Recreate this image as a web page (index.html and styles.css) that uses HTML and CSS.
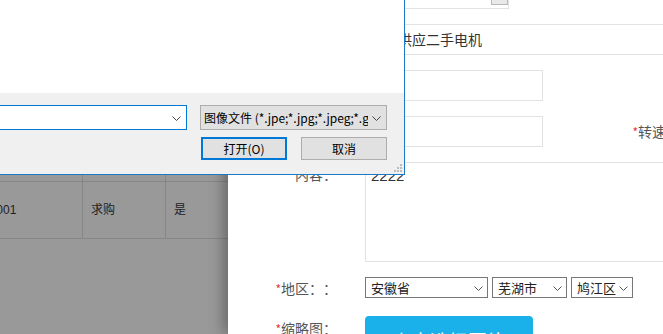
FILE: index.html
```html
<!DOCTYPE html>
<html lang="zh-CN">
<head>
<meta charset="utf-8">
<title>上传缩略图</title>
<link rel="stylesheet" href="styles.css">
</head>
<body>
<div class="screen">
  <div class="backdrop">
    <div class="tbl">
      <div class="trow thead">
        <div class="cell c1"></div><div class="cell c2"></div><div class="cell c3"></div>
      </div>
      <div class="trow">
        <div class="cell c1">20001</div><div class="cell c2">求购</div><div class="cell c3">是</div>
      </div>
    </div>
  </div>

  <div class="layer">
    <form class="form">
      <div class="row">
        <label class="lbl">日期：</label>
        <div class="ctl ipt w-s"><span class="pick"></span></div>
      </div>
      <div class="row">
        <label class="lbl"><i>*</i>标题：</label>
        <div class="ctl ipt w-l title">供应二手电机</div>
      </div>
      <div class="row">
        <label class="lbl">功率：</label>
        <div class="ctl ipt w-m"></div>
      </div>
      <div class="row">
        <label class="lbl">型号：</label>
        <div class="ctl ipt w-m"></div>
        <label class="lbl lbl2"><i>*</i>转速：</label>
      </div>
      <div class="row">
        <label class="lbl">内容：</label>
        <div class="ctl area">2222</div>
      </div>
      <div class="row row-sel">
        <label class="lbl"><i>*</i>地区：：</label>
        <div class="ctl sels">
          <div class="sel s1">安徽省<svg class="sv" viewBox="0 0 9 5"><polyline points="0.5,0.5 4.5,4.5 8.5,0.5"/></svg></div>
          <div class="sel s2">芜湖市<svg class="sv" viewBox="0 0 9 5"><polyline points="0.5,0.5 4.5,4.5 8.5,0.5"/></svg></div>
          <div class="sel s3">鸠江区<svg class="sv" viewBox="0 0 9 5"><polyline points="0.5,0.5 4.5,4.5 8.5,0.5"/></svg></div>
        </div>
      </div>
      <div class="row row-btn">
        <label class="lbl"><i>*</i>缩略图：</label>
        <div class="ctl upbtn">点击选择图片</div>
      </div>
    </form>
  </div>

  <div class="dialog">
    <div class="dlg-view"></div>
    <div class="dlg-foot">
      <div class="dlg-row">
        <div class="combo cname"><svg class="cv" viewBox="0 0 9 5"><polyline points="0.5,0.5 4.5,4.5 8.5,0.5"/></svg></div>
        <div class="combo ctype"><span class="ctxt">图像文件 (*.jpe;*.jpg;*.jpeg;*.gif;*.png)</span><svg class="cv" viewBox="0 0 9 5"><polyline points="0.5,0.5 4.5,4.5 8.5,0.5"/></svg></div>
      </div>
      <div class="dlg-row dlg-btns">
        <div class="wbtn wdef">打开(O)</div>
        <div class="wbtn">取消</div>
      </div>
      <svg class="grip" viewBox="0 0 8 8"><rect x="6" y="0" width="2" height="2"/><rect x="3" y="3" width="2" height="2"/><rect x="6" y="3" width="2" height="2"/><rect x="0" y="6" width="2" height="2"/><rect x="3" y="6" width="2" height="2"/><rect x="6" y="6" width="2" height="2"/></svg>
    </div>
  </div>
</div>
</body>
</html>
```

FILE: styles.css
```css
* { box-sizing: border-box; margin: 0; padding: 0; }
html, body { width: 663px; height: 334px; overflow: hidden; }
body { font-family: "Noto Sans CJK SC", "Noto Sans", sans-serif; background: #999; text-spacing-trim: space-all; }
.screen { position: relative; width: 663px; height: 334px; overflow: hidden; }

/* dimmed page behind */
.backdrop { width: 228px; height: 334px; background: #999; overflow: hidden; }
.tbl { margin-left: -25px; width: 300px; }
.trow { display: flex; border-bottom: 1px solid #868686; }
.thead { height: 182px; }
.trow .cell { height: 56px; line-height: 56px; font-size: 12px; color: #222; padding: 0 8px; border-right: 1px solid #868686; font-family: "Liberation Sans", "Noto Sans CJK SC", sans-serif; }
.thead .cell { height: 181px; }
.c1 { width: 108px; }
.c2 { width: 83px; }
.c3 { width: 104px; }

/* popup layer */
.layer { position: absolute; left: 228px; top: 0; width: 435px; height: 334px; background: #fff; overflow: hidden; box-shadow: -4px 0 14px rgba(0,0,0,0.35); }
.form { display: flex; flex-direction: column; gap: 15px; margin-top: -22px; }
.row { display: flex; align-items: flex-start; }
.lbl { flex: none; width: 109px; text-align: right; font-size: 14px; line-height: 25px; color: #555; white-space: nowrap; text-spacing-trim: space-all; }
.lbl i { font-style: normal; color: #e8323c; font-size: 12px; }
.ctl { margin-left: 28px; flex: none; }
.ipt { height: 31px; border: 1px solid #e2e2e2; background: #fff; position: relative; }
.w-s { width: 144px; }
.w-m { width: 178px; }
.w-l { width: 400px; }
.title { font-size: 14px; line-height: 29px; color: #333; padding-left: 32px; }
.pick { position: absolute; right: 0; bottom: 3px; width: 17px; height: 20px; border: 1px solid #b9b9b9; background: #e9e9e9; }
.lbl2 { margin-left: 28px; line-height: 31px; }
.area { width: 400px; height: 100px; border: 1px solid #e2e2e2; font-family: "Liberation Sans", sans-serif; font-size: 15px; color: #333; padding: 4px 5px; line-height: 18px; }
.row-sel .lbl { line-height: 22px; }
.sels { display: flex; gap: 4px; }
.sel { height: 21px; border: 1px solid #777; font-size: 13px; line-height: 19px; color: #222; padding-left: 5px; position: relative; background: #fff; }
.s1 { width: 123px; }
.s2 { width: 75px; }
.s3 { width: 62px; }
.sv { position: absolute; right: 4px; top: 8px; width: 9px; height: 5px; fill: none; stroke: #555; stroke-width: 1; }
.row-btn { margin-top: 1px; }
.upbtn { width: 168px; height: 50px; background: #1ab1ea; border-radius: 4px; color: #fff; font-size: 19px; line-height: 50px; text-align: center; }

/* windows file dialog */
.dialog { position: absolute; left: 0; top: 0; width: 405px; height: 175px; border-right: 1px solid #1979c9; border-bottom: 1px solid #1979c9; background: #f0f0f0; font-size: 12px; color: #000; }
.dlg-view { height: 93px; background: #fff; }
.dlg-foot { position: relative; height: 81px; padding: 12px 17px 0 0; }
.dlg-row { display: flex; }
.combo { position: relative; height: 25px; }
.cname { flex: 1; background: #fff; border: 1px solid #0078d7; border-left: none; }
.ctype { width: 187px; margin-left: 13px; background: #e1e1e1; border: 1px solid #adadad; padding: 0 18px 0 3px; line-height: 23px; overflow: hidden; white-space: nowrap; }
.ctxt { display: block; overflow: hidden; }
.cv { position: absolute; right: 5px; top: 10px; width: 9px; height: 5px; fill: none; stroke: #444; stroke-width: 1; }
.dlg-btns { justify-content: flex-end; gap: 14px; margin-top: 7px; }
.wbtn { width: 86px; height: 23px; border: 1px solid #adadad; background: #e1e1e1; text-align: center; line-height: 21px; }
.wdef { border: 2px solid #0078d7; line-height: 19px; }
.grip { position: absolute; right: 2px; bottom: 2px; width: 8px; height: 8px; fill: #bcbcbc; }
```
